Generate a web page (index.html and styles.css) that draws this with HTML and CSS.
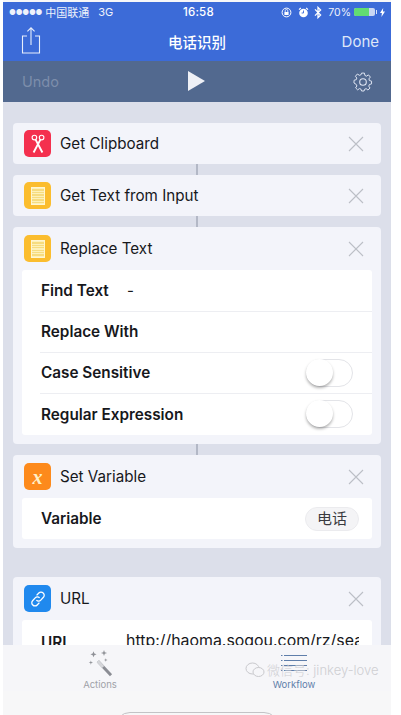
FILE: index.html
```html
<!DOCTYPE html>
<html lang="zh">
<head>
  <meta charset="UTF-8">
  <meta name="viewport" content="width=device-width, initial-scale=1.0">
  <title>电话识别</title>
  <link rel="stylesheet" href="styles.css">
</head>

<body>
<div class="phone">
  <header class="top-bar">
    <div class="status-bar">
      <div class="status-left">
        <span class="dots">●●●●●</span>
        <span>中国联通</span>
        <span class="net">3G</span>
      </div>
      <div class="status-time">16:58</div>
      <div class="status-right">
        <svg width="11" height="11" viewBox="0 0 11 11"><circle cx="5.5" cy="5.5" r="4.4" fill="none" stroke="#fff"/><rect x="3.4" y="5" width="4.2" height="3" fill="#fff"/><path d="M4.2 5V3.8a1.3 1.3 0 0 1 2.6 0V5" fill="none" stroke="#fff" stroke-width=".8"/></svg>
        <svg class="alarm" width="11" height="11" viewBox="0 0 11 11"><circle cx="5.5" cy="6" r="4.3" fill="#fff"/><path d="M1 2.6 2.8 1M10 2.6 8.2 1" stroke="#fff" stroke-width="1.2"/><path d="M5.5 3.5V6H3.6" fill="none" stroke="#3c6bd8" stroke-width=".9"/></svg>
        <svg class="bt" width="8" height="13" viewBox="0 0 8 13"><path d="M1 3.4 6.6 9 4 11.6V1.4L6.6 4 1 9.6" fill="none" stroke="#fff" stroke-width="1.3"/></svg>
        <span class="battery-text">70%</span>
        <div class="battery"><div class="battery-fill"></div></div>
        <span class="battery-tip"></span>
        <svg width="5" height="9" viewBox="0 0 5 9"><path d="M3.2 0 0 5h1.9L1.4 9 5 3.6H2.9z" fill="#fff"/></svg>
      </div>
    </div>
    <div class="nav-bar">
      <svg class="share" width="20" height="27" viewBox="0 0 20 27"><path d="M6 9H1.5v17h17V9H14M10 18V1M6.4 4.4 10 .8l3.6 3.6" fill="none" stroke="#e8eefb" stroke-width="1.1"/></svg>
      <div class="nav-title">电话识别</div>
      <div class="nav-done">Done</div>
    </div>
  </header>

  <div class="tool-bar">
    <div class="undo">Undo</div>
    <div class="play"></div>
    <svg class="gear" width="20" height="20" viewBox="0 0 20 20"><path d="M8.4 1h3.2l.5 2.6 1.7.8 2.3-1.4 2.1 2.4-1.6 2 .5 1.8 2.4.8v3l-2.4.7-.7 1.8 1.4 2.1-2.3 2.2-2-1.5-1.8.7-.5 1.9H8.4l-.6-2-1.7-.7-2.1 1.4-2.2-2.2 1.4-2.1-.7-1.7L0 12V9l2.5-.7.6-1.8-1.5-2L3.8 2l2.2 1.5 1.9-.8z" transform="translate(1 .2) scale(.9)" fill="none" stroke="#dfe5f2" stroke-width="1.1"/><circle cx="10" cy="10" r="3.3" fill="none" stroke="#dfe5f2" stroke-width="1.1"/></svg>
  </div>

  <main class="content">
    <section class="card">
      <div class="card-head">
        <div class="icon icon-red">
          <svg width="18" height="20" viewBox="0 0 18 20"><circle cx="5.4" cy="3.6" r="2.3" fill="none" stroke="#fff" stroke-width="1.1"/><circle cx="12.6" cy="3.6" r="2.3" fill="none" stroke="#fff" stroke-width="1.1"/><path d="M6.6 5.600 13.400 18.500M11.400 5.600 4.600 18.500" stroke="#fff" stroke-width="1.900"/></svg>
        </div>
        <div class="card-title">Get Clipboard</div>
        <svg class="close" width="16" height="16" viewBox="0 0 16 16"><path d="M1 1 15 15M15 1 1 15" stroke="#bcbfc6" stroke-width="1.1"/></svg>
      </div>
    </section>
    <div class="link"></div>

    <section class="card">
      <div class="card-head">
        <div class="icon icon-yellow"><div class="note"></div></div>
        <div class="card-title">Get Text from Input</div>
        <svg class="close" width="16" height="16" viewBox="0 0 16 16"><path d="M1 1 15 15M15 1 1 15" stroke="#bcbfc6" stroke-width="1.1"/></svg>
      </div>
    </section>
    <div class="link"></div>

    <section class="card card-open">
      <div class="card-head">
        <div class="icon icon-yellow"><div class="note"></div></div>
        <div class="card-title">Replace Text</div>
        <svg class="close" width="16" height="16" viewBox="0 0 16 16"><path d="M1 1 15 15M15 1 1 15" stroke="#bcbfc6" stroke-width="1.1"/></svg>
      </div>
      <div class="fields">
        <div class="field"><span class="field-name name-wide">Find Text</span><span class="field-value">-</span></div>
        <div class="field"><span class="field-name">Replace With</span></div>
        <div class="field"><span class="field-name">Case Sensitive</span><div class="toggle"><div class="knob"></div></div></div>
        <div class="field"><span class="field-name">Regular Expression</span><div class="toggle"><div class="knob"></div></div></div>
      </div>
    </section>
    <div class="link"></div>

    <section class="card card-open">
      <div class="card-head">
        <div class="icon icon-orange"><span class="icon-x">x</span></div>
        <div class="card-title">Set Variable</div>
        <svg class="close" width="16" height="16" viewBox="0 0 16 16"><path d="M1 1 15 15M15 1 1 15" stroke="#bcbfc6" stroke-width="1.1"/></svg>
      </div>
      <div class="fields">
        <div class="field"><span class="field-name">Variable</span><span class="pill">电话</span></div>
      </div>
    </section>

    <section class="card card-open card-last">
      <div class="card-head">
        <div class="icon icon-blue">
          <svg width="18" height="18" viewBox="0 0 18 18"><path d="M7.6 5.400 9.800 3a3 3 0 0 1 4.400 0 3 3 0 0 1 .2 4.300l-2.600 2.800a3 3 0 0 1-4.400 0M10.400 12.600 8.200 15a3 3 0 0 1-4.400 0 3 3 0 0 1-.2-4.300l2.600-2.800a3 3 0 0 1 4.400 0" fill="none" stroke="#fff" stroke-width="1.300"/></svg>
        </div>
        <div class="card-title">URL</div>
        <svg class="close" width="16" height="16" viewBox="0 0 16 16"><path d="M1 1 15 15M15 1 1 15" stroke="#bcbfc6" stroke-width="1.1"/></svg>
      </div>
      <div class="fields">
        <div class="field"><span class="field-name name-url">URL</span><span class="url-value">http://haoma.sogou.com/rz/search</span></div>
      </div>
    </section>
  </main>

  <footer class="tab-bar">
    <div class="tab">
      <svg class="wand" width="27" height="28" viewBox="0 0 30 32"><path d="M12 14 27 30" stroke="#8b8d94" stroke-width="3.4"/><path d="M12 14 18 20.5" stroke="#d5d6da" stroke-width="3.4"/><path d="M7 2.500 8 5l2.500 1L8 7 7 9.500 6 7 3.500 6 6 5zM19 1l.9 2.600 2.600.9-2.600.9L19 8l-.9-2.600-2.600-.9 2.600-.9zM4 13l.6 1.900 1.900.6-1.900.6L4 18l-.6-1.900-1.900-.6 1.900-.6zM21 10.500l.5 1.500 1.500.5-1.500.5-.5 1.500-.5-1.500-1.500-.5 1.500-.5z" fill="#8f9197"/></svg>
      <span class="tab-label">Actions</span>
    </div>
    <div class="tab tab-on">
      <svg class="list" width="26" height="19" viewBox="0 0 26 19"><path d="M3 .5H26M3 5.500H26M3 10.500H26M3 15.500H26" stroke="#5f7eaa"/><path d="M0 .5H1.500M0 5.500H1.500M0 10.500H1.500M0 15.500H1.500" stroke="#5f7eaa"/></svg>
      <span class="tab-label">Workflow</span>
    </div>
    <div class="watermark">
      <svg width="20" height="16" viewBox="0 0 20 16"><ellipse cx="7.5" cy="6.5" rx="6.5" ry="5.5" fill="none" stroke="#c9c9cd"/><ellipse cx="13.5" cy="10" rx="5.500" ry="4.500" fill="#f6f6f9" stroke="#c9c9cd"/></svg>
      <span>微信号: jinkey-love</span>
    </div>
  </footer>

  <div class="home-btn"></div>
</div>
</body>
</html>
```

FILE: styles.css
```css
/* page */
html,
body {
  margin: 0;
  height: 715px;
  overflow: hidden;
  background-color: #fff;
}

body {
  font-family: Inter, "Noto Sans CJK SC", sans-serif;
  color: #17181c;
}

.phone {
  width: 388px;
  height: 713px;
  margin-left: 3px;
  padding-top: 2px;
  background-color: #f7f7f8;
}

/* blue header */
.top-bar {
  height: 59px;
  background-color: #3c6bd8;
  color: #fff;
}

.status-bar {
  display: flex;
  align-items: center;
  justify-content: space-between;
  height: 20px;
  padding: 0 6px;
  font-size: 11px;
  position: relative;
}

.status-left {
  display: flex;
  align-items: center;
  gap: 3px;
  white-space: nowrap;
  color: #eef2fb;
}

.dots {
  font-size: 7.5px;
  letter-spacing: -.2px;
}

.net {
  margin-left: 6px;
}

.status-time {
  position: absolute;
  left: 180px;
  font-size: 11.5px;
  font-weight: 500;
  letter-spacing: .2px;
}

.status-right {
  display: flex;
  align-items: center;
  white-space: nowrap;
  color: #eef2fb;
  font-size: 10.5px;
}

.alarm {
  margin-left: 6px;
}

.bt {
  margin-left: 5px;
}

.battery-text {
  margin-left: 6px;
}

.battery {
  width: 21px;
  height: 8px;
  margin-left: 3px;
  background-color: #c9d6f3;
  border-radius: 2px;
}

.battery-fill {
  width: 15px;
  height: 8px;
  background-color: #62dd72;
  border-radius: 2px 0 0 2px;
}

.battery-tip {
  width: 1px;
  height: 4px;
  margin: 0 3px 0 1px;
  background-color: #dce5f8;
}

.nav-bar {
  display: flex;
  align-items: center;
  justify-content: space-between;
  height: 39px;
  padding: 0 12px 0 18px;
  position: relative;
}

.share {
  margin-top: -2px;
}

.nav-title {
  position: absolute;
  left: 0;
  right: 0;
  text-align: center;
  font-size: 14.5px;
  font-weight: 500;
}

.nav-done {
  font-size: 15px;
  color: #dfe7f8;
}

/* grey toolbar */
.tool-bar {
  display: flex;
  align-items: center;
  justify-content: space-between;
  height: 41px;
  padding: 0 18px 0 19px;
  background-color: #52698f;
  box-sizing: border-box;
  position: relative;
}

.undo {
  font-size: 14.5px;
  color: #7d8eab;
}

.play {
  position: absolute;
  left: 185px;
  top: 10px;
  width: 0;
  height: 0;
  border-left: 17px solid #eef0f6;
  border-top: 10px solid transparent;
  border-bottom: 10px solid transparent;
}

/* workflow list */
.content {
  height: 543px;
  padding: 21px 10px 0;
  box-sizing: border-box;
  overflow: hidden;
  background-color: #dcdfea;
}

.card {
  background-color: #f3f4fa;
  border-radius: 4px;
}

.card-open {
  padding-bottom: 9px;
}

.card-last {
  margin-top: 29px;
}

.card-head {
  display: flex;
  align-items: center;
  height: 41px;
  padding: 0 17px 0 11px;
}

.card-open .card-head {
  height: 43px;
}

.card-title {
  flex: 1;
  margin-left: 9px;
  font-size: 15.2px;
}

.icon {
  display: flex;
  align-items: center;
  justify-content: center;
  width: 27px;
  height: 27px;
  border-radius: 5px;
}

.icon-red {
  background-color: #f4304e;
}

.icon-yellow {
  background-color: #fbbd2e;
}

.icon-orange {
  background-color: #fd8a1c;
}

.icon-blue {
  background-color: #2089ee;
}

.note {
  width: 14px;
  height: 18px;
  background: repeating-linear-gradient(#fdf1b9 0 1px, #f6dc80 1px 2.5px);
  border: 1px solid #fff6d2;
  box-sizing: border-box;
}

.icon-x {
  font-family: "Liberation Serif", serif;
  font-style: italic;
  font-weight: 700;
  font-size: 20px;
  line-height: 20px;
  color: #fff0c8;
}

.link {
  width: 2px;
  height: 11px;
  margin-left: 183px;
  background-color: #b3b8c6;
}

.fields {
  margin: 0 9px;
  background-color: #fff;
  border-radius: 3px;
  overflow: hidden;
}

.field {
  display: flex;
  align-items: center;
  height: 41px;
  padding: 0 13px 0 19px;
  position: relative;
  white-space: nowrap;
}

.field:nth-child(4) {
  height: 42px;
}

.field:has(.toggle) {
  padding-right: 19px;
}

.field + .field::before {
  content: "";
  position: absolute;
  left: 18px;
  right: 0;
  top: 0;
  border-top: 1px solid #edeef2;
}

.field-name {
  flex: 1;
  font-size: 15.3px;
  font-weight: 600;
}

.name-wide {
  flex: none;
  width: 86px;
}

.name-url {
  flex: none;
  width: 85px;
  margin-top: 4px;
}

.field-value {
  font-size: 15px;
}

.url-value {
  flex: 1;
  overflow: hidden;
  font-size: 15.9px;
}

.toggle {
  position: relative;
  width: 47px;
  height: 28px;
  border: 1px solid #e3e4e8;
  border-radius: 14px;
  box-sizing: border-box;
}

.knob {
  position: absolute;
  left: -1px;
  top: -1px;
  width: 27px;
  height: 27px;
  background-color: #fff;
  border-radius: 50%;
  box-shadow: 0 2px 3px rgba(0, 0, 0, .3);
}

.pill {
  height: 24px;
  padding: 0 11px;
  line-height: 22px;
  font-size: 15px;
  color: #3a3b40;
  background-color: #f4f4f6;
  border: 1px solid #ebebee;
  border-radius: 12px;
  box-sizing: border-box;
}

/* bottom tabs */
.tab-bar {
  display: flex;
  height: 46px;
  background-color: #f6f6f9;
  position: relative;
}

.tab {
  display: flex;
  flex-direction: column;
  align-items: center;
  width: 194px;
  height: 46px;
  position: relative;
}

.wand {
  margin-top: 4px;
}

.list {
  margin-top: 10px;
}

.tab-label {
  position: absolute;
  bottom: 1px;
  font-size: 9.5px;
  color: #a0a2a8;
}

.tab-on .tab-label {
  color: #5f7eaa;
}

.watermark {
  position: absolute;
  left: 242px;
  top: 15px;
  display: flex;
  align-items: center;
  gap: 2px;
  font-size: 13px;
  font-weight: 300;
  white-space: nowrap;
  color: #cfcfd3;
}

.home-btn {
  width: 164px;
  height: 30px;
  margin: 21px auto 0;
  border: 1px solid #c3c3c6;
  border-radius: 15px;
  box-sizing: border-box;
}
```
